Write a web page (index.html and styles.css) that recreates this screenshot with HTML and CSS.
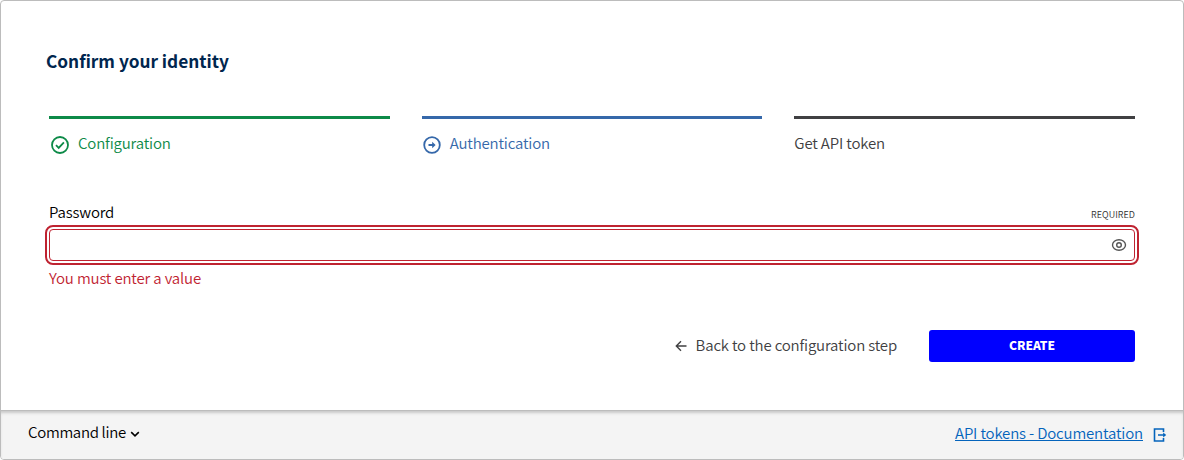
FILE: index.html
```
<!DOCTYPE html>
<html lang="en">
<head>
<meta charset="utf-8">
<title>Confirm your identity</title>
<link rel="stylesheet" href="styles.css">
</head>
<body>
<section class="card">
  <main class="content">
    <h1 class="title"><span>Confirm your identity</span></h1>
    <ol class="steps">
      <li class="step step-done">
        <svg class="step-icon" viewBox="0 0 20 20"><circle cx="10" cy="10" r="8"/><path d="M6 10.2l2.7 2.7 5.2-5.5"/></svg>
        <span>Configuration</span>
      </li>
      <li class="step step-current">
        <svg class="step-icon" viewBox="0 0 20 20"><circle cx="10" cy="10" r="7.8"/><path d="M6.5 10h5"/><path class="solid" d="M10.2 6.8L13.6 10l-3.4 3.2z"/></svg>
        <span>Authentication</span>
      </li>
      <li class="step step-next"><span>Get API token</span></li>
    </ol>
    <div class="field">
      <div class="field-head">
        <label class="label" for="password">Password</label>
        <span class="required">REQUIRED</span>
      </div>
      <div class="input-box">
        <input class="input" id="password" type="password">
        <svg class="eye" viewBox="0 0 16 14"><ellipse cx="8" cy="7" rx="6.5" ry="5.3"/><circle cx="8" cy="7" r="2.3"/></svg>
      </div>
      <p class="error"><span>You must enter a value</span></p>
    </div>
    <div class="actions">
      <a class="back">
        <svg class="arrow" viewBox="0 0 12 12"><path d="M11.5 6H1.5M6 1.3L1.3 6 6 10.7"/></svg>
        <span class="back-text">Back to the configuration step</span>
      </a>
      <button class="create" type="button">CREATE</button>
    </div>
  </main>
  <footer class="footer">
    <div class="command">
      <span class="command-text">Command line</span>
      <svg class="chevron" viewBox="0 0 10 8"><path d="M1.2 2.2L5 5.8l3.8-3.6"/></svg>
    </div>
    <div class="docs">
      <a class="docs-link">API tokens - Documentation</a>
      <svg class="exit" viewBox="0 0 14 14"><path d="M10.5 4V1H1.5v12h9v-3M5 7h7"/><path class="solid" d="M10.2 4.4L13.2 7l-3 2.6z"/></svg>
    </div>
  </footer>
</section>
</body>
</html>
```
FILE: styles.css
```
* { box-sizing: border-box; }
body {
  margin: 0;
  background: #fff;
  font-family: "Noto Sans CJK SC", "Noto Sans", sans-serif;
  font-size: 15px;
  font-weight: 350;
  letter-spacing: -0.17px;
  line-height: 24px;
  color: #000;
}
.card {
  display: flex;
  flex-direction: column;
  height: 460px;
  border: 1px solid #bcbcbc;
  border-radius: 4px;
  overflow: hidden;
}
.content { height: 409px; padding: 44px 48px 0; }
.title {
  margin: 0 0 0 -3px;
  font-size: 17.25px;
  letter-spacing: 0;
  line-height: 32px;
  font-weight: 700;
  color: #00264e;
}
.steps {
  display: grid;
  grid-template-columns: repeat(3, 1fr);
  gap: 32px;
  margin: 39px 0 0;
  padding: 0;
  list-style: none;
}
.step {
  display: flex;
  height: 40px;
  padding-top: 12px;
  border-top: 3px solid;
}
.step-done { color: #0d8a48; padding-left: 1px; }
.step-current { color: #3568aa; }
.step-next { color: #404042; }
.step-icon { width: 20px; height: 20px; margin: 4px 8px 0 0; }
svg { flex: none; fill: none; stroke: currentColor; stroke-width: 1.8; }
svg .solid { fill: currentColor; stroke: none; }
.field { margin-top: 44px; }
.field-head { display: flex; justify-content: space-between; height: 29px; }
.required { font-size: 9px; letter-spacing: 0.05px; line-height: 30px; color: #303030; }
.input-box {
  display: flex;
  align-items: center;
  height: 32px;
  padding-right: 7px;
  border: 1px solid #bf2331;
  border-radius: 4px;
  outline: 2px solid #bf2331;
  outline-offset: 2px;
}
.input { flex: 1; height: 30px; padding: 0 8px; border: 0; outline: 0; background: transparent; font: inherit; }
.eye { width: 16px; height: 14px; color: #555; stroke-width: 1.4; }
.error { margin: 5px 0 0; color: #bf2331; }
.actions {
  display: flex;
  justify-content: flex-end;
  align-items: center;
  margin-top: 40px;
  color: #404042;
}
.back { display: flex; align-items: center; gap: 9px; margin-right: 32px; }
.back-text, .command-text { margin: -1px 0 1px; }
.arrow { width: 12px; height: 12px; stroke-width: 1.4; }
.create {
  width: 206px;
  height: 32px;
  padding: 0 0 2px;
  border: 0;
  border-radius: 3px;
  background: #00f;
  color: #fff;
  font: 900 12px/30px "Noto Sans CJK SC", "Noto Sans", sans-serif;
}
.footer {
  display: flex;
  justify-content: space-between;
  flex: 1;
  padding: 10px 16px 0 27px;
  border-top: 1px solid #bcbcbc;
  background: #f4f4f4;
  box-shadow: inset 0 3px 3px -1px #c8c8c8;
}
.command, .docs { display: flex; height: 24px; align-items: center; }
.command-text { letter-spacing: -0.32px; }
.chevron { width: 10px; height: 8px; margin: 2px 0 0 4px; stroke-width: 1.6; }
.docs { margin-top: 1px; color: #0464bc; }
.docs-link { margin: -1px 0 1px; text-decoration: underline; }
.exit { width: 14px; height: 14px; margin: 2px 0 0 10px; stroke-width: 1.6; }
```
